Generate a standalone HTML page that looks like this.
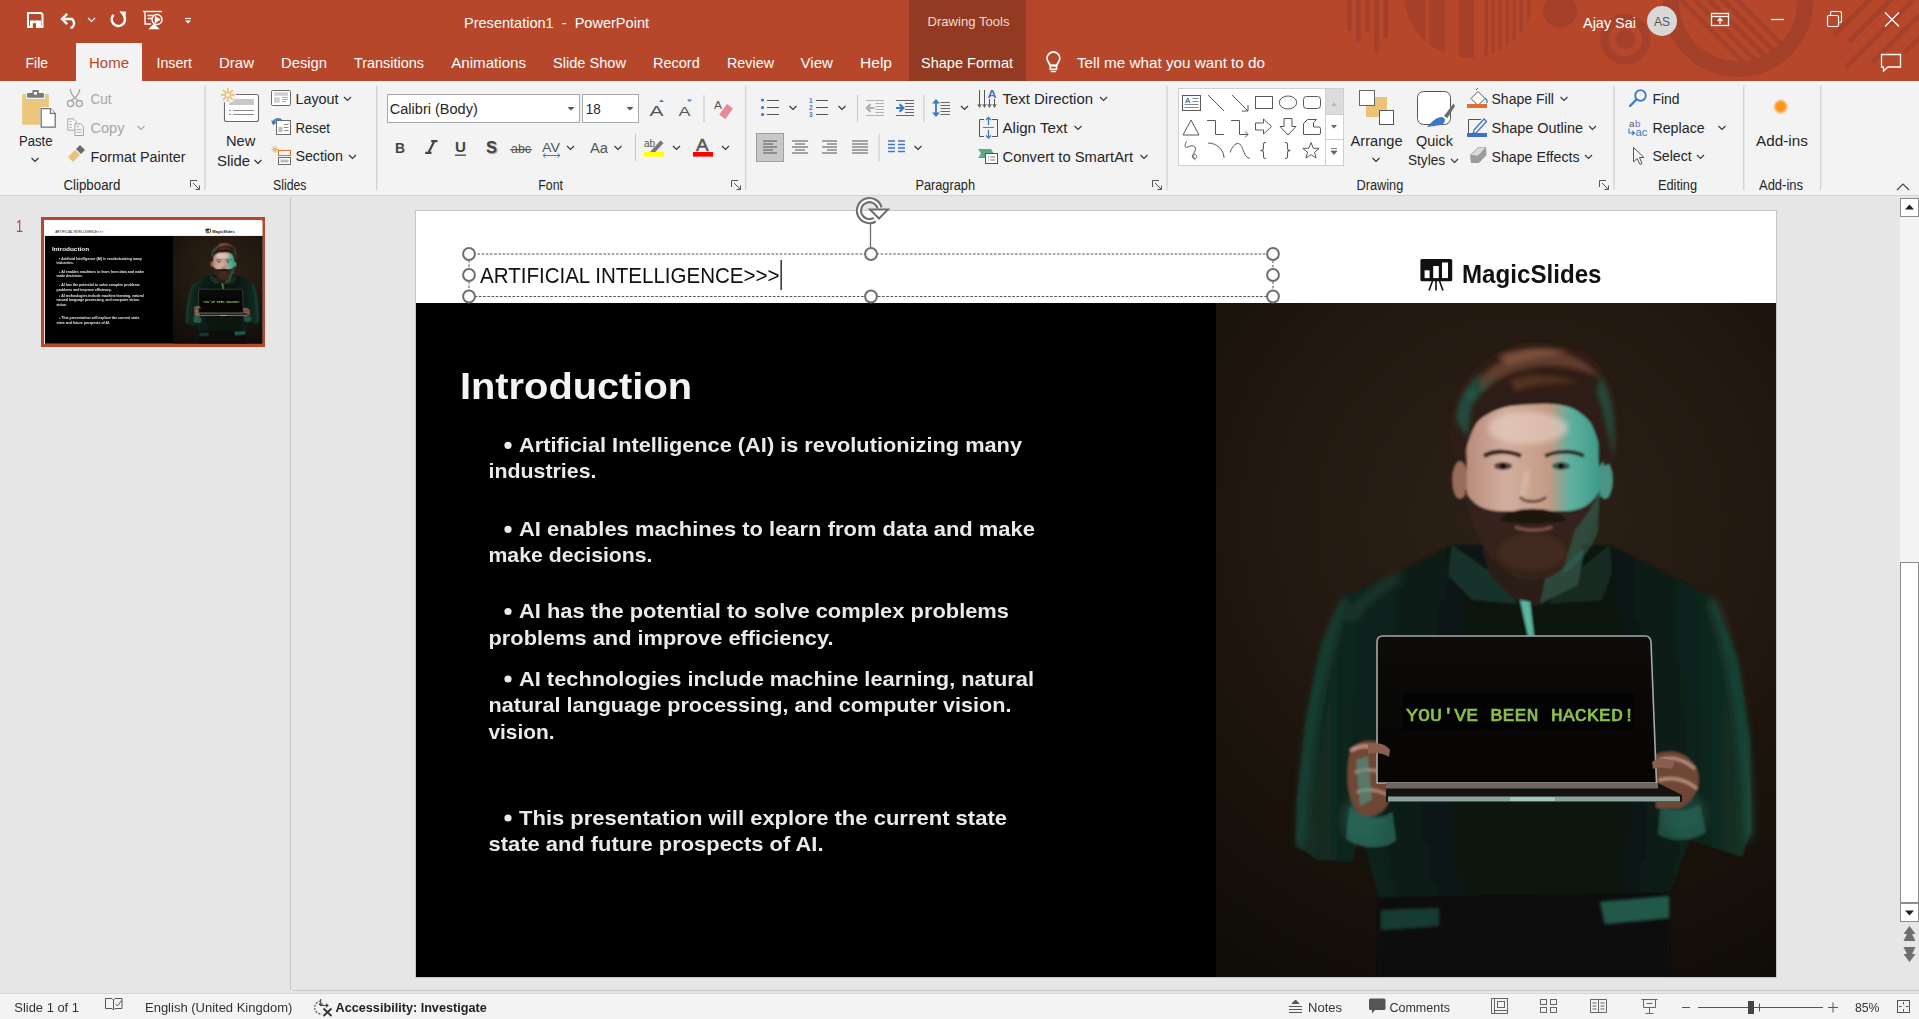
<!DOCTYPE html>
<html><head><meta charset="utf-8"><title>PowerPoint</title>
<style>
html,body{margin:0;padding:0;width:1919px;height:1019px;overflow:hidden;background:#E6E6E6}
svg{display:block;font-family:"Liberation Sans",sans-serif}
</style></head><body>
<svg width="1919" height="1019" viewBox="0 0 1919 1019">
<rect x="0" y="0" width="1919" height="81" fill="#B7472A" />
<g fill="#A5412A" stroke="none">
<rect x="1347" y="0" width="4.6" height="31"/>
<rect x="1356" y="0" width="4.6" height="41"/>
<rect x="1365" y="0" width="4.6" height="32"/>
<rect x="1374.5" y="0" width="4.6" height="52"/>
<rect x="1383.7" y="0" width="4.6" height="38"/>
<clipPath id="c1"><circle cx="1469" cy="-7" r="65"/></clipPath>
<g clip-path="url(#c1)">
<rect x="1400" y="-10" width="25" height="100"/>
<rect x="1429.7" y="-10" width="15" height="100"/>
<rect x="1458.9" y="-10" width="15" height="100"/>
<rect x="1484.5" y="-10" width="3.5" height="100"/>
<rect x="1491.5" y="-10" width="3.5" height="100"/>
<rect x="1498.5" y="-10" width="3.5" height="100"/>
<rect x="1505.5" y="-10" width="3.5" height="100"/>
<rect x="1512.5" y="-10" width="3.5" height="100"/>
<rect x="1519.5" y="-10" width="3.5" height="100"/>
<rect x="1527" y="-10" width="3.5" height="100"/>
</g>
<circle cx="1560" cy="10.7" r="17"/>
<circle cx="1625.3" cy="39.3" r="10"/>
</g>
<circle cx="1625.3" cy="39.3" r="21" fill="none" stroke="#A5412A" stroke-width="8.5"/>
<circle cx="1738" cy="2" r="67" fill="none" stroke="#A5412A" stroke-width="16"/>
<clipPath id="c2"><circle cx="1738" cy="2" r="60"/></clipPath>
<g clip-path="url(#c2)" stroke="#A5412A" stroke-width="4.6">
<path d="M1676 -5 L1766 85"/>
<path d="M1690 -5 L1780 85"/>
<path d="M1704 -5 L1794 85"/>
<path d="M1718 -5 L1808 85"/>
<path d="M1732 -5 L1822 85"/>
</g>
<g stroke="#A5412A" stroke-width="4.6">
<path d="M1872 -3 L1833.6 35.400000000000006"/>
<path d="M1894 -3 L1849.2 41.800000000000004"/>
<path d="M1916 -3 L1845.6 67.4"/>
<path d="M1938 -3 L1872.4 62.60000000000001"/>
<path d="M1960 -3 L1904.0 53.0"/>
</g>
<rect x="909" y="0" width="117" height="81" fill="#933A22" />
<rect x="76" y="43" width="66" height="38" fill="#F3F3F3" />
<rect x="0" y="81" width="1919" height="114" fill="#F3F3F3" />
<rect x="0" y="195" width="1919" height="1" fill="#D4D4D4" />
<rect x="0" y="196" width="1919" height="794" fill="#E6E6E6" />
<rect x="290" y="198" width="1" height="792" fill="#C6C6C6" />
<rect x="293" y="990" width="1626" height="1" fill="#C8C8C8" />
<rect x="0" y="993" width="1919" height="1" fill="#D6D6D6" />
<rect x="0" y="994" width="1919" height="25" fill="#F3F3F3" />
<path d="M28 13 H41 L42.5 14.5 V27 H28 Z" fill="none" stroke="#fff" stroke-width="2"/>
<rect x="30" y="20.5" width="11" height="7.5" fill="#fff"/>
<rect x="32.8" y="23.2" width="3.2" height="4.8" fill="#B7472A"/>
<path d="M62.5 19 H72 A5.5 5.5 0 0 1 72 27.6 H70.5" fill="none" stroke="#fff" stroke-width="2.4"/>
<path d="M67.2 13.8 L62 19 L67.2 24.2" fill="none" stroke="#fff" stroke-width="2.4"/>
<path d="M88 18 L91.5 21.5 L95 18" fill="none" stroke="#fff" stroke-width="1.1"/>
<path d="M113.5 14.8 A6.6 6.6 0 1 0 124 16" fill="none" stroke="#fff" stroke-width="2.6"/>
<path d="M119.5 11.2 L126.2 11.8 L124.8 18.5 Z" fill="#fff"/>
<g fill="none" stroke="#fff" stroke-width="1.4">
<path d="M143 11.5 H162"/><path d="M145 11.5 V24 H151"/><path d="M147.5 15.5 H154 M147.5 18.5 H152"/>
<circle cx="157" cy="19.5" r="5"/><path d="M155.5 17 L159.5 19.5 L155.5 22 Z" fill="#fff"/>
<path d="M150 28.5 H158 L154 24.5 Z" fill="#fff"/>
</g>
<path d="M185 18.5 H191" stroke="#fff" stroke-width="1.2"/><path d="M185 20.5 L188 23.5 L191 20.5 Z" fill="#fff"/>
<text x="464" y="27.5" font-size="15" fill="#FFFFFF" textLength="185" lengthAdjust="spacingAndGlyphs" >Presentation1  -  PowerPoint</text>
<text x="927.5" y="25.5" font-size="13" fill="#F2D9D2" textLength="82" lengthAdjust="spacingAndGlyphs" >Drawing Tools</text>
<text x="1583" y="27.5" font-size="15" fill="#FFFFFF" textLength="53" lengthAdjust="spacingAndGlyphs" >Ajay Sai</text>
<circle cx="1662" cy="21" r="15" fill="#D8D8D8"/>
<text x="1662" y="26" font-size="12" fill="#555" text-anchor="middle" >AS</text>
<g fill="none" stroke="#fff" stroke-width="1.3"><rect x="1711.5" y="13.5" width="17" height="12"/><path d="M1711.5 16.5 H1728.5"/><path d="M1720 24 V18.5 M1717.5 21 L1720 18.5 L1722.5 21"/></g>
<path d="M1771 19.5 H1784" stroke="#fff" stroke-width="1.2"/>
<g fill="none" stroke="#fff" stroke-width="1.2"><rect x="1827.5" y="15.5" width="11" height="11" rx="1.5"/><path d="M1830.5 15.5 V13 a1.5 1.5 0 0 1 1.5 -1.5 H1840 a1.5 1.5 0 0 1 1.5 1.5 V21 a1.5 1.5 0 0 1 -1.5 1.5 H1838.5"/></g>
<path d="M1885 12.5 L1899 26.5 M1899 12.5 L1885 26.5" stroke="#fff" stroke-width="1.3"/>
<path d="M1881.5 54.5 H1900.5 V67 H1888 L1883.5 71 V67 H1881.5 Z" fill="none" stroke="#fff" stroke-width="1.3"/>
<text x="25.5" y="67.5" font-size="15" fill="#FFFFFF" textLength="22.5" lengthAdjust="spacingAndGlyphs" >File</text>
<text x="89" y="67.5" font-size="15" fill="#B7472A" textLength="40" lengthAdjust="spacingAndGlyphs" >Home</text>
<text x="156.5" y="67.5" font-size="15" fill="#FFFFFF" textLength="35.5" lengthAdjust="spacingAndGlyphs" >Insert</text>
<text x="219" y="67.5" font-size="15" fill="#FFFFFF" textLength="35" lengthAdjust="spacingAndGlyphs" >Draw</text>
<text x="281" y="67.5" font-size="15" fill="#FFFFFF" textLength="46" lengthAdjust="spacingAndGlyphs" >Design</text>
<text x="354" y="67.5" font-size="15" fill="#FFFFFF" textLength="70" lengthAdjust="spacingAndGlyphs" >Transitions</text>
<text x="451.3" y="67.5" font-size="15" fill="#FFFFFF" textLength="74.7" lengthAdjust="spacingAndGlyphs" >Animations</text>
<text x="553" y="67.5" font-size="15" fill="#FFFFFF" textLength="73" lengthAdjust="spacingAndGlyphs" >Slide Show</text>
<text x="653" y="67.5" font-size="15" fill="#FFFFFF" textLength="46.7" lengthAdjust="spacingAndGlyphs" >Record</text>
<text x="727" y="67.5" font-size="15" fill="#FFFFFF" textLength="47" lengthAdjust="spacingAndGlyphs" >Review</text>
<text x="800.6" y="67.5" font-size="15" fill="#FFFFFF" textLength="32.4" lengthAdjust="spacingAndGlyphs" >View</text>
<text x="860" y="67.5" font-size="15" fill="#FFFFFF" textLength="32" lengthAdjust="spacingAndGlyphs" >Help</text>
<text x="921" y="67.5" font-size="15" fill="#FFFFFF" textLength="92" lengthAdjust="spacingAndGlyphs" >Shape Format</text>
<path d="M1050.3 65.5 L1048.3 62 A6.3 6.3 0 1 1 1058.5 62 L1056.5 65.5 Z" fill="none" stroke="#fff" stroke-width="1.8" stroke-linejoin="round"/>
<rect x="1050.3" y="65.5" width="6.2" height="3.8" fill="none" stroke="#fff" stroke-width="1.6"/>
<path d="M1051.3 71.6 H1055.5" stroke="#fff" stroke-width="1.5" stroke-linecap="round"/>
<text x="1077" y="67.5" font-size="15" fill="#FFFFFF" textLength="188" lengthAdjust="spacingAndGlyphs" >Tell me what you want to do</text>
<rect x="22.1" y="94" width="26.8" height="30.7" rx="1.5" fill="#EBC77E"/>
<rect x="26" y="92" width="19" height="7" fill="#F3F3F3"/>
<rect x="27" y="93" width="17" height="4.7" rx="1" fill="#7A7A7A"/><rect x="32.3" y="90.1" width="6.5" height="5" rx="1" fill="#7A7A7A"/><rect x="34" y="92" width="3" height="2.6" fill="#fff"/>
<rect x="40" y="107" width="17" height="21.5" fill="#F3F3F3"/>
<path d="M41.2 108.6 H50.4 L55.2 113.4 V127.2 H41.2 Z" fill="#fff" stroke="#727272" stroke-width="1.3"/><path d="M50.4 108.6 V113.4 H55.2" fill="#fff" stroke="#727272" stroke-width="1.2"/>
<text x="19" y="145.7" font-size="14" fill="#262626" textLength="33.5" lengthAdjust="spacingAndGlyphs" >Paste</text>
<path d="M31.5 158 L35.0 161.5 L38.5 158" fill="none" stroke="#333" stroke-width="1.2"/>
<g fill="none" stroke="#A6A6A6" stroke-width="1.3"><path d="M70.2 89 Q71 96 78.3 100.7 M79.8 89 Q79 96 70.5 100.7"/><circle cx="70.5" cy="103.6" r="3.1"/><circle cx="79.3" cy="103.6" r="3.1"/></g>
<text x="90.5" y="103.8" font-size="14" fill="#A6A6A6" textLength="21" lengthAdjust="spacingAndGlyphs" >Cut</text>
<g fill="#FAF6FA" stroke="#A8A2AA" stroke-width="1"><path d="M67.8 118.9 H73.5 L76.3 121.7 V130.2 H67.8 Z"/><path d="M74.9 123.8 H80.6 L83.4 126.6 V135.5 H74.9 Z"/></g>
<path d="M69.5 121.7 H71.5 M69.5 124.5 H72 M69.5 127.3 H72 M76.5 126.6 H79 M76.5 129.4 H81.5 M76.5 132.2 H81.5" stroke="#A8A2AA" stroke-width="0.9"/>
<text x="90.5" y="132.6" font-size="14" fill="#A6A6A6" textLength="34" lengthAdjust="spacingAndGlyphs" >Copy</text>
<path d="M137.5 126 L141.0 129.5 L144.5 126" fill="none" stroke="#A6A6A6" stroke-width="1.1"/>
<path d="M68 157 L75 150 L80 155 L73 162 Z" fill="#EBC27A"/><path d="M76 149 L80 145 L85 150 L81 154 Z" fill="#6B6B6B"/>
<text x="90.5" y="161.5" font-size="14" fill="#262626" textLength="95" lengthAdjust="spacingAndGlyphs" >Format Painter</text>
<text x="63.4" y="189.9" font-size="14" fill="#262626" textLength="57" lengthAdjust="spacingAndGlyphs" >Clipboard</text>
<g fill="none" stroke="#555" stroke-width="1"><path d="M190.5 187 V180.5 H197"/><path d="M193 183 L199.5 189.5 M195.5 189.5 H199.5 V185.5"/></g>
<rect x="204.5" y="86" width="1" height="104" fill="#C8C8C8" />
<rect x="224.5" y="94.5" width="34" height="27" rx="2" fill="#fff" stroke="#6B6B6B" stroke-width="1.1"/>
<rect x="229" y="99" width="25" height="6" fill="#C8C8C8"/>
<path d="M229 110.5 H231 M233 110.5 H254 M229 114.5 H231 M233 114.5 H254" stroke="#8A8A8A" stroke-width="1"/>
<circle cx="227.9" cy="94.9" r="8.2" fill="#F3F3F3"/>
<g stroke="#EBC07A" stroke-width="1.7"><path d="M227.9 88 V101.8 M221 94.9 H234.8 M223 90 L232.8 99.8 M232.8 90 L223 99.8"/></g><circle cx="227.9" cy="94.9" r="3.2" fill="#EBC07A"/><circle cx="227.9" cy="94.9" r="1.9" fill="#F3F3F3"/>
<text x="226" y="145.7" font-size="14" fill="#262626" textLength="29.4" lengthAdjust="spacingAndGlyphs" >New</text>
<text x="217" y="165.5" font-size="14" fill="#262626" textLength="33" lengthAdjust="spacingAndGlyphs" >Slide</text>
<path d="M254.5 160 L258.0 163.5 L261.5 160" fill="none" stroke="#333" stroke-width="1.2"/>
<rect x="271.5" y="90.5" width="19" height="15" rx="1" fill="#fff" stroke="#6B6B6B" stroke-width="1"/><rect x="274" y="92.3" width="14" height="3.5" fill="#D0D0D0"/><rect x="274" y="97.3" width="5.8" height="5.5" fill="#D0D0D0"/><path d="M282 97.5 H287.8 M282 99.5 H287.8 M282 101.5 H286" stroke="#A0A0A0" stroke-width="0.9"/>
<text x="295.4" y="103.8" font-size="14" fill="#262626" textLength="43.2" lengthAdjust="spacingAndGlyphs" >Layout</text>
<path d="M344 97 L347.5 100.5 L351 97" fill="none" stroke="#333" stroke-width="1.1"/>
<rect x="276.5" y="120.5" width="14" height="14" fill="#fff" stroke="#6B6B6B" stroke-width="1"/><rect x="278.5" y="127" width="4" height="5" fill="#BDBDBD"/><path d="M284 124.5 H288.5 M284 127.5 H288.5 M284 130.5 H288.5" stroke="#8A8A8A"/>
<path d="M273 124 A5 5 0 0 1 282 121" fill="none" stroke="#3C78C3" stroke-width="1.6"/><path d="M271 120.5 L273.5 125.5 L277 121.5 Z" fill="#3C78C3"/>
<text x="295.4" y="132.5" font-size="14" fill="#262626" textLength="34.6" lengthAdjust="spacingAndGlyphs" >Reset</text>
<rect x="278.5" y="150.5" width="12" height="5" fill="none" stroke="#E0702E" stroke-width="1"/><rect x="278.5" y="157.5" width="12" height="7" fill="#fff" stroke="#6B6B6B" stroke-width="1"/><rect x="280.5" y="159.5" width="8" height="3" fill="#BDBDBD"/>
<g stroke="#F0B048" stroke-width="1"><path d="M275 146 V153 M271.5 149.5 H278.5 M272.5 147 L277.5 152 M277.5 147 L272.5 152"/></g>
<text x="295.4" y="161.2" font-size="14" fill="#262626" textLength="47.6" lengthAdjust="spacingAndGlyphs" >Section</text>
<path d="M349 155 L352.5 158.5 L356 155" fill="none" stroke="#333" stroke-width="1.1"/>
<text x="273" y="189.9" font-size="14" fill="#262626" textLength="33.5" lengthAdjust="spacingAndGlyphs" >Slides</text>
<rect x="376.2" y="86" width="1" height="104" fill="#C8C8C8" />
<rect x="387.5" y="94.5" width="192" height="28" fill="#fff" stroke="#A8A8A8" stroke-width="1"/>
<text x="389.8" y="113.7" font-size="14" fill="#262626" textLength="88" lengthAdjust="spacingAndGlyphs" >Calibri (Body)</text>
<path d="M567.5 107 H574.5 L571 110.5 Z" fill="#555"/>
<rect x="582.5" y="94.5" width="56" height="28" fill="#fff" stroke="#A8A8A8" stroke-width="1"/>
<text x="585.8" y="113.7" font-size="14" fill="#262626" textLength="15" lengthAdjust="spacingAndGlyphs" >18</text>
<path d="M626.5 107 H633.5 L630 110.5 Z" fill="#555"/>
<text x="649.5" y="115.5" font-size="15" fill="#555" textLength="14" lengthAdjust="spacingAndGlyphs" >A</text>
<path d="M659 102 L661.5 99.5 L664 102 Z" fill="#3C78C3"/>
<text x="678.5" y="115.5" font-size="13" fill="#555" textLength="12" lengthAdjust="spacingAndGlyphs" >A</text>
<path d="M687 99.5 L689.5 102 L692 99.5 Z" fill="#3C78C3"/>
<rect x="703.5" y="95" width="1" height="27" fill="#C8C8C8" />
<text x="714" y="109" font-size="11" fill="#555" textLength="8" lengthAdjust="spacingAndGlyphs" >A</text>
<path d="M719 115 L727 104 L733 108.5 L725 119.5 Z" fill="#E38B96"/><path d="M719 115 L725 119.5" stroke="#fff" stroke-width="1"/>
<text x="395" y="153" font-size="15" fill="#444" textLength="10" lengthAdjust="spacingAndGlyphs" font-weight="bold" >B</text>
<path d="M431.2 141.2 H437.5 M425.2 152.8 H431.5 M434.3 141.2 L428.4 152.8" fill="none" stroke="#444" stroke-width="2.2"/>
<text x="455" y="152" font-size="14" fill="#444" textLength="11" lengthAdjust="spacingAndGlyphs" font-weight="bold" >U</text>
<rect x="455" y="154.5" width="11" height="1.3" fill="#444" />
<text x="486" y="153" font-size="16" fill="#444" textLength="11" lengthAdjust="spacingAndGlyphs" font-weight="bold" style="text-shadow:1px 1px 1px #999">S</text>
<text x="511" y="153" font-size="13" fill="#555" textLength="20" lengthAdjust="spacingAndGlyphs" >abc</text>
<rect x="510" y="149" width="22" height="1.2" fill="#555" />
<text x="542" y="152" font-size="13" fill="#555" textLength="18" lengthAdjust="spacingAndGlyphs" >AV</text>
<path d="M543 155.5 H560 M545.5 153.5 L543 155.5 L545.5 157.5 M557.5 153.5 L560 155.5 L557.5 157.5" fill="none" stroke="#3C78C3" stroke-width="1"/>
<path d="M567 146 L570.5 149.5 L574 146" fill="none" stroke="#333" stroke-width="1.1"/>
<text x="590" y="153" font-size="14" fill="#555" textLength="18" lengthAdjust="spacingAndGlyphs" >Aa</text>
<path d="M614.5 146 L618.0 149.5 L621.5 146" fill="none" stroke="#333" stroke-width="1.1"/>
<rect x="635" y="134" width="1" height="27" fill="#C8C8C8" />
<text x="644" y="147" font-size="10" fill="#555" textLength="11" lengthAdjust="spacingAndGlyphs" >ab</text>
<path d="M650 152 L660.5 140.5 L663.5 143 L653 154.5 Z" fill="#777"/>
<rect x="644" y="152" width="20" height="4.6" fill="#FFFF00" />
<path d="M673 146 L676.5 149.5 L680 146" fill="none" stroke="#333" stroke-width="1.1"/>
<text x="696" y="150.6" font-size="16.5" fill="#555" textLength="12.6" lengthAdjust="spacingAndGlyphs" stroke="#555" stroke-width="0.5">A</text>
<rect x="693" y="152" width="20" height="4.6" fill="#FF0000" />
<path d="M722 146 L725.5 149.5 L729 146" fill="none" stroke="#333" stroke-width="1.1"/>
<text x="538.3" y="189.9" font-size="14" fill="#262626" textLength="24.7" lengthAdjust="spacingAndGlyphs" >Font</text>
<g fill="none" stroke="#555" stroke-width="1"><path d="M731.5 187 V180.5 H738"/><path d="M734 183 L740.5 189.5 M736.5 189.5 H740.5 V185.5"/></g>
<rect x="745.2" y="86" width="1" height="104" fill="#C8C8C8" />
<circle cx="762.5" cy="100" r="1.6" fill="#3C78C3"/>
<circle cx="762.5" cy="107.5" r="1.6" fill="#3C78C3"/>
<circle cx="762.5" cy="114.5" r="1.6" fill="#3C78C3"/>
<path d="M767 100.5 H779 M767 107.5 H779 M767 114.5 H779" stroke="#555" stroke-width="1.1"/>
<path d="M789.5 106 L793.0 109.5 L796.5 106" fill="none" stroke="#333" stroke-width="1.1"/>
<text x="809" y="103" font-size="6.5" fill="#3C78C3" font-weight="bold" >1</text>
<text x="809" y="110" font-size="6.5" fill="#3C78C3" font-weight="bold" >2</text>
<text x="809" y="117" font-size="6.5" fill="#3C78C3" font-weight="bold" >3</text>
<path d="M816 100.5 H828 M816 107.5 H828 M816 114.5 H828" stroke="#555" stroke-width="1.1"/>
<path d="M838.5 106 L842.0 109.5 L845.5 106" fill="none" stroke="#333" stroke-width="1.1"/>
<rect x="857" y="95" width="1" height="27" fill="#C8C8C8" />
<path d="M866 100.5 H884 M866 115.5 H884" stroke="#B0B0B0" stroke-width="1"/>
<path d="M875.5 103.5 H884 M875.5 106.5 H884 M875.5 109.5 H884 M875.5 112.5 H884" stroke="#B0B0B0" stroke-width="1"/>
<path d="M867 108 H874.5 M870.5 104.2 L866.8 108 L870.5 111.8" fill="none" stroke="#B0B0B0" stroke-width="2.2"/>
<path d="M896 100.5 H914 M896 115.5 H914" stroke="#666" stroke-width="1"/>
<path d="M905 103.5 H914 M905 106.5 H914 M905 109.5 H914 M905 112.5 H914" stroke="#666" stroke-width="1"/>
<path d="M896 108 H903 M899.6 104.2 L903.4 108 L899.6 111.8" fill="none" stroke="#3C78C3" stroke-width="2.2"/>
<rect x="923.4" y="95" width="1" height="27" fill="#C8C8C8" />
<path d="M936 101 V115" stroke="#3C78C3" stroke-width="1.8"/><path d="M932 103.5 L936 99 L940 103.5 Z M932 112.5 L936 117 L940 112.5 Z" fill="#3C78C3"/>
<path d="M940.5 102.5 H950 M940.5 105.5 H950 M940.5 108.5 H950 M940.5 111.5 H950 M940.5 114.5 H950" stroke="#666" stroke-width="1"/>
<path d="M961 106 L964.5 109.5 L968 106" fill="none" stroke="#333" stroke-width="1.1"/>
<path d="M979.5 90 V106 M984.5 90 V106 M989.5 99 V106 M994.5 99 V106" stroke="#555" stroke-width="1"/>
<path d="M977.8 104 L979.5 107.5 L981.2 104 M982.8 104 L984.5 107.5 L986.2 104 M987.8 104 L989.5 107.5 L991.2 104 M992.8 104 L994.5 107.5 L996.2 104" fill="none" stroke="#555" stroke-width="0.9"/>
<text x="987.5" y="97.5" font-size="11" fill="#3C78C3" textLength="9" lengthAdjust="spacingAndGlyphs" font-weight="bold" >A</text>
<text x="1002.5" y="104" font-size="14" fill="#262626" textLength="90.5" lengthAdjust="spacingAndGlyphs" >Text Direction</text>
<path d="M1100 97 L1103.5 100.5 L1107 97" fill="none" stroke="#333" stroke-width="1.1"/>
<path d="M979.5 119.5 H984 M992 119.5 H997.5 V136.5 H992 M984 136.5 H979.5 Z" fill="none" stroke="#555" stroke-width="1"/><path d="M979.5 119.5 V136.5 M997.5 119.5 V136.5" stroke="#555"/>
<path d="M988.5 117.5 V125 M986 120 L988.5 117.5 L991 120 M988.5 130 V138 M986 135.5 L988.5 138 L991 135.5" fill="none" stroke="#3C78C3" stroke-width="1.3"/>
<path d="M983 127.5 H994" stroke="#777" stroke-width="1"/>
<text x="1002.5" y="132.6" font-size="14" fill="#262626" textLength="65" lengthAdjust="spacingAndGlyphs" >Align Text</text>
<path d="M1074.5 126 L1078.0 129.5 L1081.5 126" fill="none" stroke="#333" stroke-width="1.1"/>
<path d="M978 149 H991 L993.5 153.5 L991 158 H978 L981 153.5 Z" fill="#5BAA7E"/>
<rect x="985.5" y="153.5" width="12" height="10" fill="#fff" stroke="#555" stroke-width="1"/><path d="M988 157 H989 M990.5 157 H995 M988 160 H989 M990.5 160 H995" stroke="#777" stroke-width="1"/>
<text x="1002.5" y="161.5" font-size="14" fill="#262626" textLength="130.5" lengthAdjust="spacingAndGlyphs" >Convert to SmartArt</text>
<path d="M1140.5 155 L1144.0 158.5 L1147.5 155" fill="none" stroke="#333" stroke-width="1.1"/>
<rect x="756.5" y="133.5" width="27" height="28" fill="#C8C8C8" stroke="#A0A0A0" stroke-width="1"/>
<path d="M763 141 H777 M763 147 H777 M763 153 H777" stroke="#555" stroke-width="1.1"/>
<path d="M763 144 H773 M763 150 H773" stroke="#555" stroke-width="1.1"/>
<path d="M792 141 H808 M792 147 H808 M792 153 H808" stroke="#555" stroke-width="1.1"/>
<path d="M795 144 H805 M795 150 H805" stroke="#555" stroke-width="1.1"/>
<path d="M822 141 H837 M822 147 H837 M822 153 H837" stroke="#555" stroke-width="1.1"/>
<path d="M827 144 H837 M827 150 H837" stroke="#555" stroke-width="1.1"/>
<path d="M852 141 H868 M852 144 H868 M852 147 H868 M852 150 H868 M852 153 H868" stroke="#555" stroke-width="1.1"/>
<rect x="878.6" y="134" width="1" height="27" fill="#C8C8C8" />
<path d="M888 141 H895 M888 144.5 H895 M888 148 H895 M888 151.5 H895" stroke="#3C78C3" stroke-width="1.3"/>
<path d="M898 141 H905 M898 144.5 H905 M898 148 H905 M898 151.5 H905" stroke="#3C78C3" stroke-width="1.3"/>
<path d="M914.5 146 L918.0 149.5 L921.5 146" fill="none" stroke="#333" stroke-width="1.1"/>
<text x="915.4" y="189.9" font-size="14" fill="#262626" textLength="59.6" lengthAdjust="spacingAndGlyphs" >Paragraph</text>
<g fill="none" stroke="#555" stroke-width="1"><path d="M1152.5 187 V180.5 H1159"/><path d="M1155 183 L1161.5 189.5 M1157.5 189.5 H1161.5 V185.5"/></g>
<rect x="1166.5" y="86" width="1" height="104" fill="#C8C8C8" />
<rect x="1178.5" y="88.5" width="165" height="77" fill="#fff" stroke="#D0D0D0" stroke-width="1"/>
<path d="M1325.5 88.5 V165.5 M1325.5 114.5 H1343.5 M1325.5 139.5 H1343.5" stroke="#D0D0D0"/>
<rect x="1326" y="89" width="17" height="25" fill="#DCDCDC" />
<path d="M1331 106 H1337 L1334 102.5 Z" fill="#B8B8B8"/>
<path d="M1331 125 H1337 L1334 128.5 Z" fill="#666"/>
<path d="M1331 148.5 H1337 M1331 151 H1337 L1334 154.5 Z" fill="#666" stroke="#666" stroke-width="0.8"/>
<g fill="none" stroke="#595959" stroke-width="1">
<rect x="1182.5" y="95.5" width="18" height="15"/>
<path d="M1192.5 98.5 H1198.5 M1192.5 101.5 H1198.5 M1184.5 104.5 H1198.5 M1184.5 107.5 H1198.5" stroke="#888"/>
<text x="1184.8" y="103.2" font-size="8" font-weight="bold" fill="#3C78C3" stroke="none">A</text>
<path d="M1208 95 L1224 111"/>
<path d="M1232 95 L1248 111 M1248 105 V111 H1242"/>
<rect x="1255.5" y="96.5" width="17" height="12"/>
<ellipse cx="1288" cy="102.5" rx="8.7" ry="6.5"/>
<rect x="1303.5" y="96.5" width="17" height="12" rx="3"/>
<path d="M1183 135 L1191 120 L1199 135 Z"/>
<path d="M1207 120.5 H1215.5 V134.5 H1224"/>
<path d="M1231 120.5 H1239.5 V134.5 H1248 M1245 131.5 L1248 134.5 L1245 137.5"/>
<path d="M1255.5 123 H1263.5 V119 L1271.5 126.5 L1263.5 134 V130 H1255.5 Z"/>
<path d="M1284 118.5 H1292 V126.5 H1296 L1288 135 L1280 126.5 H1284 Z"/>
<path d="M1303.5 123.5 L1307.5 119.5 H1316.5 L1313.5 122.5 V127 H1319 Q1320.5 127 1320.5 128.5 V133 Q1320.5 134.5 1319 134.5 H1303.5 Z"/>
<path d="M1186.5 141.5 C1184 146 1185 148.5 1188 147 C1192 144.5 1197 146 1195 151 C1193 155 1191 157 1193.5 158.5 C1196 160 1198 156 1195.5 154.5 C1193 153 1192 157 1195.5 160"/>
<path d="M1208 143 C1217 143 1224 150 1224 158"/>
<path d="M1230 152.5 C1232 147 1235 143 1238.5 143.5 C1242 144 1243 152 1246 156 C1247.5 158 1249 158.5 1250 158"/>
</g>
<path d="M1266 142.5 C1263 142.5 1263.5 144 1263.5 147 C1263.5 150 1263 150.5 1260.5 150.5 C1263 150.5 1263.5 151 1263.5 154 C1263.5 157 1263 158.5 1266 158.5 M1285 142.5 C1288 142.5 1287.5 144 1287.5 147 C1287.5 150 1288 150.5 1290.5 150.5 C1288 150.5 1287.5 151 1287.5 154 C1287.5 157 1288 158.5 1285 158.5" fill="none" stroke="#595959" stroke-width="1.1"/>
<path d="M1311 142.5 L1313.2 148.2 L1319.2 148.4 L1314.5 152.2 L1316.1 158 L1311 154.7 L1305.9 158 L1307.5 152.2 L1302.8 148.4 L1308.8 148.2 Z" fill="none" stroke="#595959" stroke-width="1"/>
<rect x="1359.5" y="90.5" width="14" height="14" fill="#fff" stroke="#555" stroke-width="1"/>
<rect x="1366" y="97" width="21" height="20" fill="#EBC27A"/>
<rect x="1359.5" y="90.5" width="15" height="15" fill="#fff" stroke="#666" stroke-width="1"/>
<rect x="1379.5" y="110.5" width="14" height="14" fill="#fff" stroke="#555" stroke-width="1"/>
<text x="1350.6" y="146" font-size="14" fill="#262626" textLength="52" lengthAdjust="spacingAndGlyphs" >Arrange</text>
<path d="M1372.5 158 L1376.0 161.5 L1379.5 158" fill="none" stroke="#333" stroke-width="1.2"/>
<rect x="1417.5" y="91.5" width="33" height="33" rx="6" fill="#fff" stroke="#555" stroke-width="1"/>
<path d="M1444 116 L1453.5 103.5 L1455 106 L1447.5 118 Z" fill="#6B6B6B"/>
<path d="M1427 127 C1432 121 1437 117 1442 117 C1446 118 1446 123 1441 125 Z" fill="#3C78C3"/>
<text x="1416" y="146" font-size="14" fill="#262626" textLength="37" lengthAdjust="spacingAndGlyphs" >Quick</text>
<text x="1408" y="165" font-size="14" fill="#262626" textLength="37" lengthAdjust="spacingAndGlyphs" >Styles</text>
<path d="M1451 159 L1454.5 162.5 L1458 159" fill="none" stroke="#333" stroke-width="1.1"/>
<path d="M1471 98.5 L1478 91.5 L1485 98.5 L1478 105.5 Z" fill="#fff" stroke="#555" stroke-width="1"/><path d="M1476 90 L1478 88" stroke="#555"/>
<path d="M1485 98 C1487 100 1488 102 1486.5 103" fill="none" stroke="#3C78C3" stroke-width="1.3"/>
<rect x="1467" y="104" width="20" height="4" fill="#E0702E" />
<text x="1491.5" y="104" font-size="14" fill="#262626" textLength="62.5" lengthAdjust="spacingAndGlyphs" >Shape Fill</text>
<path d="M1560.5 97 L1564.0 100.5 L1567.5 97" fill="none" stroke="#333" stroke-width="1.1"/>
<path d="M1468.5 134 V119.5 H1481" fill="none" stroke="#555" stroke-width="1"/>
<path d="M1474 130 L1484 119 L1486.5 121.5 L1476.5 132.5 L1473 133.5 Z" fill="none" stroke="#3C78C3" stroke-width="1.3"/>
<rect x="1467" y="133" width="20" height="4" fill="#3F6FC6" />
<text x="1491.5" y="133" font-size="14" fill="#262626" textLength="91.5" lengthAdjust="spacingAndGlyphs" >Shape Outline</text>
<path d="M1589 126 L1592.5 129.5 L1596 126" fill="none" stroke="#333" stroke-width="1.1"/>
<path d="M1470 155 L1478.5 147 H1486 L1486.5 155 L1479 163 H1471 Z" fill="#9C9C9C"/><path d="M1471 155 L1479 147.5 H1485.5 L1478 155.5 Z" fill="#DADADA"/>
<text x="1491.5" y="161.5" font-size="14" fill="#262626" textLength="88" lengthAdjust="spacingAndGlyphs" >Shape Effects</text>
<path d="M1585 155 L1588.5 158.5 L1592 155" fill="none" stroke="#333" stroke-width="1.1"/>
<text x="1356.5" y="189.9" font-size="14" fill="#262626" textLength="46.8" lengthAdjust="spacingAndGlyphs" >Drawing</text>
<g fill="none" stroke="#555" stroke-width="1"><path d="M1599.5 187 V180.5 H1606"/><path d="M1602 183 L1608.5 189.5 M1604.5 189.5 H1608.5 V185.5"/></g>
<rect x="1613.5" y="86" width="1" height="104" fill="#C8C8C8" />
<circle cx="1640.5" cy="95.5" r="5.3" fill="none" stroke="#3C78C3" stroke-width="1.8"/><path d="M1636.5 99.5 L1630 106" stroke="#3C78C3" stroke-width="2.2" stroke-linecap="round"/>
<text x="1652.4" y="104" font-size="14" fill="#262626" textLength="27.1" lengthAdjust="spacingAndGlyphs" >Find</text>
<text x="1629" y="126.5" font-size="9.5" fill="#555" textLength="5.5" lengthAdjust="spacingAndGlyphs" >a</text>
<text x="1635" y="126.5" font-size="9.5" fill="#8E5BB5" textLength="5.5" lengthAdjust="spacingAndGlyphs" >b</text>
<text x="1635.5" y="135.5" font-size="10.5" fill="#3C78C3" textLength="12" lengthAdjust="spacingAndGlyphs" >ac</text>
<path d="M1629 128.5 V133 H1634 M1632 131 L1634.5 133 L1632 135" fill="none" stroke="#3C78C3" stroke-width="1.1"/>
<text x="1652.4" y="133.2" font-size="14" fill="#262626" textLength="52.3" lengthAdjust="spacingAndGlyphs" >Replace</text>
<path d="M1718.5 126 L1722.0 129.5 L1725.5 126" fill="none" stroke="#333" stroke-width="1.1"/>
<path d="M1633.5 147.5 V162 L1637 158.5 L1640 164.5 L1642 163.5 L1639.5 157.5 H1644 Z" fill="none" stroke="#555" stroke-width="1"/>
<text x="1652.4" y="161.4" font-size="14" fill="#262626" textLength="39.4" lengthAdjust="spacingAndGlyphs" >Select</text>
<path d="M1697 155 L1700.5 158.5 L1704 155" fill="none" stroke="#333" stroke-width="1.1"/>
<text x="1658" y="189.9" font-size="14" fill="#262626" textLength="39" lengthAdjust="spacingAndGlyphs" >Editing</text>
<rect x="1743.3" y="86" width="1" height="104" fill="#C8C8C8" />
<filter id="dotblur" x="-50%" y="-50%" width="200%" height="200%"><feGaussianBlur stdDeviation="0.8"/></filter><circle cx="1780.7" cy="106.6" r="6.3" fill="#FF9418" filter="url(#dotblur)"/>
<text x="1756" y="145.7" font-size="14" fill="#262626" textLength="51.8" lengthAdjust="spacingAndGlyphs" >Add-ins</text>
<text x="1759" y="189.9" font-size="14" fill="#262626" textLength="44" lengthAdjust="spacingAndGlyphs" >Add-ins</text>
<rect x="1820.2" y="86" width="1" height="104" fill="#C8C8C8" />
<path d="M1897 190 L1903 184 L1909 190" fill="none" stroke="#444" stroke-width="1.2"/>
<rect x="1900" y="198" width="19" height="724" fill="#F3F3F3" />
<rect x="1900.5" y="198.5" width="18" height="18" fill="#fff" stroke="#8C8C8C" stroke-width="1"/>
<path d="M1905 209.5 H1914 L1909.5 204.5 Z" fill="#222"/>
<rect x="1900.5" y="562.5" width="18" height="340" fill="#fff" stroke="#8C8C8C" stroke-width="1"/>
<rect x="1900.5" y="903.5" width="18" height="18" fill="#fff" stroke="#8C8C8C" stroke-width="1"/>
<path d="M1905 910.5 H1914 L1909.5 915.5 Z" fill="#222"/>
<path d="M1903.5 934 L1909.5 926 L1915.5 934 H1912 L1915.5 941 H1903.5 L1907 934 Z" fill="#6E6E6E"/>
<path d="M1903.5 947 H1915.5 L1912 954 L1915.5 954 L1909.5 962 L1903.5 954 H1907 Z" fill="#6E6E6E"/>
<defs>
<filter id="soft" x="-5%" y="-5%" width="110%" height="110%"><feGaussianBlur stdDeviation="0.7"/></filter>
<filter id="blur2" x="-20%" y="-20%" width="140%" height="140%"><feGaussianBlur stdDeviation="2.5"/></filter>
<filter id="blur4" x="-30%" y="-30%" width="160%" height="160%"><feGaussianBlur stdDeviation="5"/></filter>
<filter id="blur10" x="-50%" y="-50%" width="200%" height="200%"><feGaussianBlur stdDeviation="14"/></filter>
<filter id="blur1" x="-20%" y="-20%" width="140%" height="140%"><feGaussianBlur stdDeviation="1.2"/></filter>
<clipPath id="photoclip"><rect x="1216" y="303" width="560" height="674"/></clipPath>
<g id="slide">
<rect x="416" y="211" width="1360" height="766" fill="#FFFFFF" />
<rect x="416" y="303" width="1360" height="674" fill="#000000" />
<text x="480" y="283.2" font-size="22" fill="#111" textLength="299.5" lengthAdjust="spacingAndGlyphs" >ARTIFICIAL INTELLIGENCE&gt;&gt;&gt;</text>
<rect x="1420.4" y="258.9" width="31.8" height="22.4" rx="1.5" fill="#111"/>
<rect x="1424.6" y="270.3" width="5" height="7.8" fill="#fff"/><rect x="1433.2" y="266" width="5.6" height="12.1" fill="#fff"/><rect x="1442" y="262.5" width="6" height="15.6" fill="#fff"/>
<path d="M1432.5 281 L1429 290.5 M1436 281 V290.5 M1439.5 281 L1443 290.5" stroke="#111" stroke-width="1.6"/>
<text x="1462" y="283" font-size="25.5" fill="#111" textLength="139.5" lengthAdjust="spacingAndGlyphs" font-weight="bold" >MagicSlides</text>
<g filter="url(#soft)">
<text x="460" y="398.5" font-size="36" fill="#F4F4F4" textLength="232" lengthAdjust="spacingAndGlyphs" font-weight="bold" >Introduction</text>
<circle cx="508" cy="445.3" r="3.6" fill="#EAEAEA"/>
<text x="519" y="451.8" font-size="21" fill="#EAEAEA" textLength="503" lengthAdjust="spacingAndGlyphs" font-weight="bold" >Artificial Intelligence (AI) is revolutionizing many</text>
<text x="488.5" y="478.3" font-size="21" fill="#EAEAEA" textLength="108" lengthAdjust="spacingAndGlyphs" font-weight="bold" >industries.</text>
<circle cx="508" cy="529.3" r="3.6" fill="#EAEAEA"/>
<text x="519" y="535.8" font-size="21" fill="#EAEAEA" textLength="516" lengthAdjust="spacingAndGlyphs" font-weight="bold" >AI enables machines to learn from data and make</text>
<text x="488.5" y="562.3" font-size="21" fill="#EAEAEA" textLength="164" lengthAdjust="spacingAndGlyphs" font-weight="bold" >make decisions.</text>
<circle cx="508" cy="611.5" r="3.6" fill="#EAEAEA"/>
<text x="519" y="618" font-size="21" fill="#EAEAEA" textLength="490" lengthAdjust="spacingAndGlyphs" font-weight="bold" >AI has the potential to solve complex problems</text>
<text x="488.5" y="644.5" font-size="21" fill="#EAEAEA" textLength="345" lengthAdjust="spacingAndGlyphs" font-weight="bold" >problems and improve efficiency.</text>
<circle cx="508" cy="679.0" r="3.6" fill="#EAEAEA"/>
<text x="519" y="685.5" font-size="21" fill="#EAEAEA" textLength="515" lengthAdjust="spacingAndGlyphs" font-weight="bold" >AI technologies include machine learning, natural</text>
<text x="488.5" y="712.0" font-size="21" fill="#EAEAEA" textLength="523" lengthAdjust="spacingAndGlyphs" font-weight="bold" >natural language processing, and computer vision.</text>
<text x="488.5" y="738.5" font-size="21" fill="#EAEAEA" textLength="66" lengthAdjust="spacingAndGlyphs" font-weight="bold" >vision.</text>
<circle cx="508" cy="818.0" r="3.6" fill="#EAEAEA"/>
<text x="519" y="824.5" font-size="21" fill="#EAEAEA" textLength="488" lengthAdjust="spacingAndGlyphs" font-weight="bold" >This presentation will explore the current state</text>
<text x="488.5" y="851.0" font-size="21" fill="#EAEAEA" textLength="335" lengthAdjust="spacingAndGlyphs" font-weight="bold" >state and future prospects of AI.</text>
</g>
<radialGradient id="bgGrad" cx="1520" cy="520" r="520" gradientUnits="userSpaceOnUse"><stop offset="0" stop-color="#2C2117"/><stop offset="0.45" stop-color="#231910"/><stop offset="0.75" stop-color="#18120B"/><stop offset="1" stop-color="#100C08"/></radialGradient>
<linearGradient id="shirtGrad" x1="1290" y1="0" x2="1760" y2="0" gradientUnits="userSpaceOnUse"><stop offset="0" stop-color="#143226"/><stop offset="0.15" stop-color="#10241D"/><stop offset="0.38" stop-color="#111712"/><stop offset="0.68" stop-color="#101611"/><stop offset="0.85" stop-color="#0F221B"/><stop offset="1" stop-color="#15362A"/></linearGradient>
<linearGradient id="faceGrad" x1="1466" y1="0" x2="1600" y2="0" gradientUnits="userSpaceOnUse"><stop offset="0" stop-color="#B88C7C"/><stop offset="0.3" stop-color="#D2AE9E"/><stop offset="0.62" stop-color="#C49A84"/><stop offset="0.78" stop-color="#5FB0A0"/><stop offset="1" stop-color="#3E9C8A"/></linearGradient>
<linearGradient id="screenGrad" x1="0" y1="636" x2="0" y2="783" gradientUnits="userSpaceOnUse"><stop offset="0" stop-color="#0E0C0A"/><stop offset="0.4" stop-color="#090806"/><stop offset="1" stop-color="#060504"/></linearGradient>
<g clip-path="url(#photoclip)">
<rect x="1216" y="303" width="560" height="674" fill="url(#bgGrad)" />
<g filter="url(#blur1)">
<path d="M1452 545 L1400 572 L1345 595 L1322 640 L1306 720 L1297 800 L1296 846 L1318 860 L1352 862 L1360 830 L1378 895 L1378 977 L1669 977 L1669 895 L1690 840 L1742 857 L1752 830 L1750 740 L1738 660 L1712 597 L1660 570 L1610 545 Z" fill="url(#shirtGrad)"/>
<radialGradient id="chestG" cx="1525" cy="760" r="190" gradientUnits="userSpaceOnUse"><stop offset="0" stop-color="#080C0A" stop-opacity="0.3"/><stop offset="0.6" stop-color="#080C0A" stop-opacity="0.18"/><stop offset="1" stop-color="#080C0A" stop-opacity="0"/></radialGradient>
<rect x="1300" y="560" width="450" height="417" fill="url(#chestG)"/>
<path d="M1345 600 C1322 650 1305 730 1300 845" fill="none" stroke="#2B7562" stroke-width="7" opacity="0.4" filter="url(#blur4)"/>
<path d="M1712 600 C1735 650 1748 740 1749 840" fill="none" stroke="#2D7C68" stroke-width="8" opacity="0.4" filter="url(#blur4)"/>
<path d="M1400 575 C1380 590 1360 600 1350 620" fill="none" stroke="#2B6E5C" stroke-width="8" opacity="0.35" filter="url(#blur4)"/>
<ellipse cx="1362" cy="820" rx="18" ry="22" fill="#2E6E5E" opacity="0.5" filter="url(#blur4)"/>
<ellipse cx="1685" cy="815" rx="20" ry="22" fill="#2A6A5A" opacity="0.45" filter="url(#blur4)"/>
<path d="M1452 545 L1495 575 L1518 604 L1472 600 L1448 575 Z" fill="#15302A"/>
<path d="M1610 545 L1572 575 L1548 604 L1602 600 L1612 572 Z" fill="#142A24"/>
<path d="M1482 548 L1584 548 L1578 585 L1535 606 L1515 600 L1490 575 Z" fill="#2C1E17"/>
<path d="M1548 566 L1584 550 L1578 585 L1540 604 Z" fill="#2F7A6A" opacity="0.45"/>
<path d="M1520 600 L1528 636 L1534 636 L1530 602 Z" fill="#5BB5A0"/>
<ellipse cx="1460" cy="480" rx="8" ry="19" fill="#9A6C5A"/>
<ellipse cx="1605" cy="480" rx="8" ry="19" fill="#4A9484"/>
<path d="M1466 430 C1470 410 1500 400 1532 400 C1565 400 1594 410 1598 430 L1600 495 L1586 540 L1560 566 L1532 572 L1505 566 L1480 540 L1467 495 Z" fill="url(#faceGrad)"/>
<ellipse cx="1528" cy="428" rx="40" ry="16" fill="#EBD2C6" opacity="0.6" filter="url(#blur2)"/>
<path d="M1465 490 C1468 530 1490 565 1515 577 C1525 581 1540 581 1550 577 C1575 565 1597 530 1600 490 C1592 505 1580 511 1566 511 L1500 511 C1485 511 1472 505 1465 490 Z" fill="#35231A"/>
<ellipse cx="1532" cy="552" rx="34" ry="18" fill="#4E3628" opacity="0.55" filter="url(#blur2)"/>
<path d="M1575 530 C1585 518 1594 505 1600 490 L1598 532 C1590 552 1576 566 1562 574 Z" fill="#2F6E60" opacity="0.5"/>
<path d="M1503 519 C1515 508 1550 508 1563 519 C1550 522 1516 522 1503 519 Z" fill="#1E130E" stroke="#1E130E" stroke-width="4"/>
<path d="M1515 527 C1525 531 1542 531 1552 527" fill="none" stroke="#7A5046" stroke-width="3.5"/>
<path d="M1520 497 C1525 503 1540 503 1546 497" fill="none" stroke="#6B4A40" stroke-width="3"/>
<path d="M1528 470 C1526 482 1524 490 1522 497" fill="none" stroke="#E8CFC4" stroke-width="5" opacity="0.5" filter="url(#blur2)"/>
<path d="M1484 456 C1495 450 1510 451 1521 456" fill="none" stroke="#3A241A" stroke-width="4.5"/>
<path d="M1545 456 C1556 451 1572 450 1584 456" fill="none" stroke="#2E2A22" stroke-width="4"/>
<ellipse cx="1503" cy="466" rx="9" ry="3.8" fill="#5A4038"/><ellipse cx="1561" cy="466" rx="9" ry="3.8" fill="#3A5A52"/>
<circle cx="1503" cy="466" r="3.2" fill="#1A0F0B"/><circle cx="1561" cy="466" r="3.2" fill="#1A0F0B"/>
<path d="M1452 456 C1449 430 1450 405 1458 390 C1466 376 1474 368 1488 358 C1500 350 1515 343 1529 342 C1550 342 1570 346 1584 352 C1598 360 1606 372 1612 388 C1618 405 1619 430 1615 462 L1604 466 C1600 448 1596 432 1590 422 C1580 410 1568 404 1548 404 C1528 404 1512 405 1502 408 C1490 412 1480 418 1476 424 C1470 434 1466 448 1464 460 Z" fill="#2F1D14"/>
<path d="M1478 380 C1495 360 1520 350 1545 350 C1570 352 1590 362 1600 378 C1590 372 1570 366 1545 366 C1520 368 1498 376 1480 392 Z" fill="#6A4232" opacity="0.85" filter="url(#blur2)"/>
<path d="M1498 356 C1515 348 1545 346 1570 352 C1550 356 1528 358 1508 366 Z" fill="#8A5A42" opacity="0.7" filter="url(#blur2)"/>
<path d="M1510 380 C1530 372 1560 374 1580 384 C1560 382 1535 384 1515 392 Z" fill="#5A3828" opacity="0.8" filter="url(#blur2)"/>
<path d="M1456 420 C1458 400 1466 384 1482 372 C1474 392 1470 410 1468 438 Z" fill="#1F6A5A" opacity="0.6" filter="url(#blur2)"/>
<path d="M1466 395 C1474 386 1486 380 1496 378 C1488 386 1480 394 1474 404 Z" fill="#1E6858" opacity="0.55" filter="url(#blur2)"/>
<path d="M1600 375 C1612 392 1616 420 1614 458 C1608 436 1604 410 1596 392 Z" fill="#1F6A5A" opacity="0.55" filter="url(#blur2)"/>
<path d="M1350 752 C1356 740 1372 738 1384 744 L1388 804 C1380 818 1362 820 1354 808 C1346 792 1346 770 1350 752 Z" fill="#6E4636"/>
<path d="M1352 750 C1362 744 1374 746 1386 752" fill="none" stroke="#B88A7A" stroke-width="4" stroke-linecap="round"/>
<path d="M1356 772 C1364 768 1376 770 1386 774 M1358 792 C1366 788 1376 790 1386 794" fill="none" stroke="#A87A6A" stroke-width="3.5" stroke-linecap="round"/>
<path d="M1356 760 L1368 756 L1372 800 L1360 806 Z" fill="#4FA090" opacity="0.55"/>
<path d="M1350 806 C1360 818 1380 822 1392 812 L1396 840 C1384 850 1360 850 1346 838 Z" fill="#2C6E5E" opacity="0.75"/>
<path d="M1656 754 C1672 748 1690 752 1698 772 C1702 788 1692 802 1680 808 L1656 808 Z" fill="#6E4636"/>
<path d="M1660 760 C1672 756 1684 760 1694 768 M1660 780 C1672 776 1686 780 1696 788" fill="none" stroke="#B08878" stroke-width="3.5" stroke-linecap="round"/>
<path d="M1660 806 C1672 812 1690 812 1700 804 L1706 832 C1692 842 1670 842 1658 834 Z" fill="#2A6A5A" opacity="0.6"/>
<path d="M1378 897 L1669 892 L1669 935 L1378 940 Z" fill="#0A110D"/>
<path d="M1600 902 L1669 896 L1669 918 L1605 924 Z" fill="#2A6A58" opacity="0.8" filter="url(#blur1)"/>
<path d="M1381 910 L1439 908 L1439 926 L1381 930 Z" fill="#1E4E40" opacity="0.7" filter="url(#blur1)"/>
<path d="M1378 940 L1669 935 L1669 977 L1378 977 Z" fill="#0B0C09"/>
</g>
<path d="M1377 783 L1377 642 Q1377 636 1383 636 L1645 636 Q1650.5 636 1651 642 L1656.5 783 Z" fill="url(#screenGrad)" stroke="#A8A8A8" stroke-width="1.6"/>
<rect x="1403" y="693.6" width="231" height="36.5" fill="#030303" />
<g filter="url(#soft)">
<text x="1406" y="720.5" font-size="19" fill="#8DC04A" textLength="229" lengthAdjust="spacingAndGlyphs" font-family="Liberation Mono" stroke="#8DC04A" stroke-width="0.6">YOU'VE BEEN HACKED!</text>
</g>
<path d="M1386 783 H1658 L1682 795 V802 H1386 Z" fill="#15120F"/>
<rect x="1386" y="783" width="272" height="5.5" fill="#6E6660" />
<rect x="1388" y="796.5" width="292" height="5" fill="#8AA39C" />
<rect x="1510" y="797" width="45" height="4" fill="#9FC8BE" />
<path d="M1368 745 C1376 741 1386 744 1390 750 L1389 757 C1383 753 1375 752 1368 754 Z" fill="#8A5E4E"/>
<path d="M1652 762 C1660 757 1670 758 1675 763 L1671 769 C1665 767 1657 767 1653 769 Z" fill="#8A5E4E"/>
</g>
</g>
</defs>
<rect x="41" y="217" width="224" height="130" fill="#B7472A" />
<rect x="44" y="220" width="218" height="124" fill="#FFFFFF" />
<g transform="translate(44.9 221.2) scale(0.16) translate(-416 -211)"><use href="#slide"/></g>
<text x="16" y="232" font-size="16" fill="#B7472A" textLength="7" lengthAdjust="spacingAndGlyphs" >1</text>
<rect x="415.5" y="210.5" width="1361" height="767" fill="none" stroke="#C6C6C6" stroke-width="1"/>
<use href="#slide"/>
<g fill="none" stroke="#555" stroke-width="1" stroke-dasharray="2.6 1.6">
<rect x="469" y="254" width="804" height="42.5"/>
</g>
<path d="M870.5 223.5 V247" stroke="#6E6E6E" stroke-width="1.3"/>
<circle cx="469" cy="254" r="5.9" fill="#fff" stroke="#6E6E6E" stroke-width="2"/>
<circle cx="871" cy="254" r="5.9" fill="#fff" stroke="#6E6E6E" stroke-width="2"/>
<circle cx="1273" cy="254" r="5.9" fill="#fff" stroke="#6E6E6E" stroke-width="2"/>
<circle cx="469" cy="275" r="5.9" fill="#fff" stroke="#6E6E6E" stroke-width="2"/>
<circle cx="1273" cy="275" r="5.9" fill="#fff" stroke="#6E6E6E" stroke-width="2"/>
<circle cx="469" cy="296.5" r="5.9" fill="#fff" stroke="#6E6E6E" stroke-width="2"/>
<circle cx="871" cy="296.5" r="5.9" fill="#fff" stroke="#6E6E6E" stroke-width="2"/>
<circle cx="1273" cy="296.5" r="5.9" fill="#fff" stroke="#6E6E6E" stroke-width="2"/>
<path d="M874.75 219.7 A10.5 10.5 0 1 1 879.6 207.9" fill="none" stroke="#6E6E6E" stroke-width="6.2"/>
<path d="M874.75 219.7 A10.5 10.5 0 1 1 879.6 207.9" fill="none" stroke="#fff" stroke-width="2"/>
<path d="M870 209.5 L888 209.5 L879 218.5 Z" fill="#fff" stroke="#6E6E6E" stroke-width="2" stroke-linejoin="miter"/>
<rect x="780.5" y="260" width="1.3" height="30" fill="#111" />
<text x="14.3" y="1012" font-size="13" fill="#333333" textLength="64.7" lengthAdjust="spacingAndGlyphs" >Slide 1 of 1</text>
<g fill="none" stroke="#555" stroke-width="1"><path d="M105.5 998.5 H112 L113.5 1000 V1010 L112 1008.5 H105.5 Z"/><path d="M113.5 1000 L115 998.5 H122 V1008.5 H115 L113.5 1010"/><path d="M115.5 1004 L117.5 1006 L121.5 1000.5" stroke="#555"/></g>
<text x="145" y="1012" font-size="13" fill="#333333" textLength="147.3" lengthAdjust="spacingAndGlyphs" >English (United Kingdom)</text>
<path d="M320.5 1001 A6.5 6.5 0 0 0 322 1014" fill="none" stroke="#555" stroke-width="1.2" stroke-dasharray="2 1.3"/>
<path d="M320.7 999 V1005.5 H328 M318.8 1003.5 L320.7 1005.5 L322.6 1003.5 M326 1003.6 L328 1005.5 L326 1007.4" fill="none" stroke="#444" stroke-width="1.1"/>
<path d="M323.5 1008.5 L331.5 1016 M331.5 1008.5 L323.5 1016" stroke="#333" stroke-width="1.8"/>
<text x="335.6" y="1012" font-size="13" fill="#222" textLength="151.1" lengthAdjust="spacingAndGlyphs" font-weight="bold" >Accessibility: Investigate</text>
<g fill="none" stroke="#555" stroke-width="1"><path d="M1289 1006.5 H1302 M1289 1009.5 H1302 M1289 1012.5 H1302"/><path d="M1292 1003.5 L1295.5 1000 L1299 1003.5 Z" fill="#555"/></g>
<text x="1308" y="1012" font-size="13" fill="#333333" textLength="34" lengthAdjust="spacingAndGlyphs" >Notes</text>
<path d="M1369 1000 Q1369 998.5 1370.5 998.5 H1384 Q1385.5 998.5 1385.5 1000 V1008.5 Q1385.5 1010 1384 1010 H1375 L1372 1013.5 V1010 H1370.5 Q1369 1010 1369 1008.5 Z" fill="#555"/>
<text x="1389.4" y="1012" font-size="13" fill="#333333" textLength="60.6" lengthAdjust="spacingAndGlyphs" >Comments</text>
<g fill="none" stroke="#666" stroke-width="1">
<rect x="1491.5" y="998.5" width="16" height="15"/><path d="M1494.5 998.5 V1013.5 M1494.5 1010.5 H1507.5"/><rect x="1497.5" y="1001.5" width="7" height="6"/>
<rect x="1540.5" y="999.5" width="6" height="5"/><rect x="1550.5" y="999.5" width="6" height="5"/><rect x="1540.5" y="1007.5" width="6" height="5"/><rect x="1550.5" y="1007.5" width="6" height="5"/>
<path d="M1590.5 999.5 H1598.5 V1012.5 H1590.5 Z M1598.5 999.5 H1606.5 V1012.5 H1598.5 Z M1592.5 1003 H1596.5 M1592.5 1006 H1596.5 M1592.5 1009 H1596.5 M1600.5 1003 H1604.5 M1600.5 1006 H1604.5 M1600.5 1009 H1604.5"/>
<path d="M1641.5 999.5 H1657.5 M1643.5 999.5 V1007.5 H1655.5 V999.5 M1649.5 1007.5 V1013 M1645.5 1013.5 H1653.5"/><path d="M1646.5 1003.5 H1652.5"/>
</g>
<path d="M1682 1007.5 H1690 M1698 1007.5 H1823 M1828 1007.5 H1838 M1833 1002.5 V1012.5 M1759.5 1003.5 V1011.5" stroke="#555" stroke-width="1"/>
<rect x="1748" y="1001" width="6" height="13" fill="#444" />
<text x="1855" y="1012" font-size="13" fill="#333333" textLength="24.5" lengthAdjust="spacingAndGlyphs" >85%</text>
<g fill="none" stroke="#555" stroke-width="1"><rect x="1897.5" y="1000.5" width="12" height="12"/><path d="M1903.5 1002 V1004.5 M1903.5 1009 V1011.5 M1899 1006.5 H1901.5 M1906 1006.5 H1908.5"/></g>
</svg>
</body></html>
